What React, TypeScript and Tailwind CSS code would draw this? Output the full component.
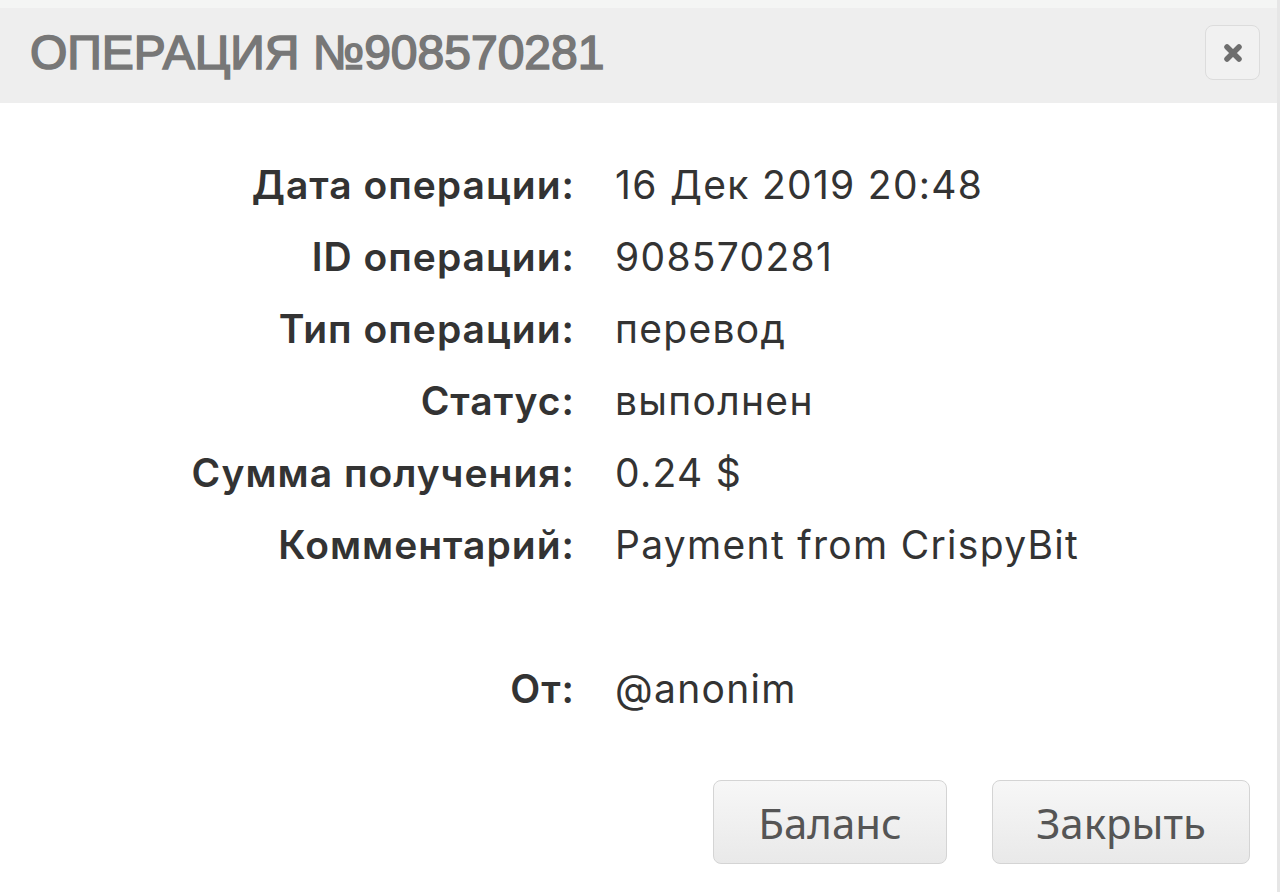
import React from "react";

const rows: [string, string][] = [
  ["Дата операции:", "16 Дек 2019 20:48"],
  ["ID операции:", "908570281"],
  ["Тип операции:", "перевод"],
  ["Статус:", "выполнен"],
  ["Сумма получения:", "0.24 $"],
  ["Комментарий:", "Payment from CrispyBit"],
  ["", ""],
  ["От:", "@anonim"],
];

export default function App() {
  return (
    <div className="w-[1280px] h-[892px] bg-white overflow-hidden border-r-[3px] border-[#e6e6e6] flex flex-col">
      <div className="h-[8px] bg-[#f4f5f4]" />
      <div className="h-[95px] bg-[#eeeeee] flex items-center justify-between pl-[30px] pr-[17px] pb-[6px]">
        <h1 className="text-[48px] font-normal tracking-[0px] text-[#777] font-['Liberation_Sans',sans-serif] leading-none [-webkit-text-stroke:1.6px_#777]">
          ОПЕРАЦИЯ №908570281
        </h1>
        <button className="w-[55px] h-[55px] rounded-[8px] border border-[#dcdcdc] bg-[#f1f1f1] flex items-center justify-center">
          <svg width="22" height="22" viewBox="0 0 22 22">
            <path d="M5 5 L17 17 M17 5 L5 17" stroke="#6e6e6e" strokeWidth="5.5" strokeLinecap="round" />
          </svg>
        </button>
      </div>
      <div className="pt-[46px] grid grid-cols-[575px_1fr] gap-x-[40px] font-['Inter',sans-serif] text-[39px] text-[#333]">
        {rows.map(([label, value], i) => (
          <React.Fragment key={i}>
            <div className="h-[72px] flex items-center justify-end font-semibold tracking-[1px]">{label}</div>
            <div className="h-[72px] flex items-center tracking-[1.3px]">{value}</div>
          </React.Fragment>
        ))}
      </div>
      <div className="mt-[55px] flex justify-end gap-[45px] pr-[27px] font-['Noto_Sans',sans-serif] text-[42px] text-[#555]">
        <button className="w-[234px] h-[84px] rounded-[8px] border border-[#d4d4d4] bg-gradient-to-b from-[#f7f7f7] to-[#e9e9e9]">
          Баланс
        </button>
        <button className="w-[258px] h-[84px] rounded-[8px] border border-[#d4d4d4] bg-gradient-to-b from-[#f7f7f7] to-[#e9e9e9]">
          Закрыть
        </button>
      </div>
    </div>
  );
}
